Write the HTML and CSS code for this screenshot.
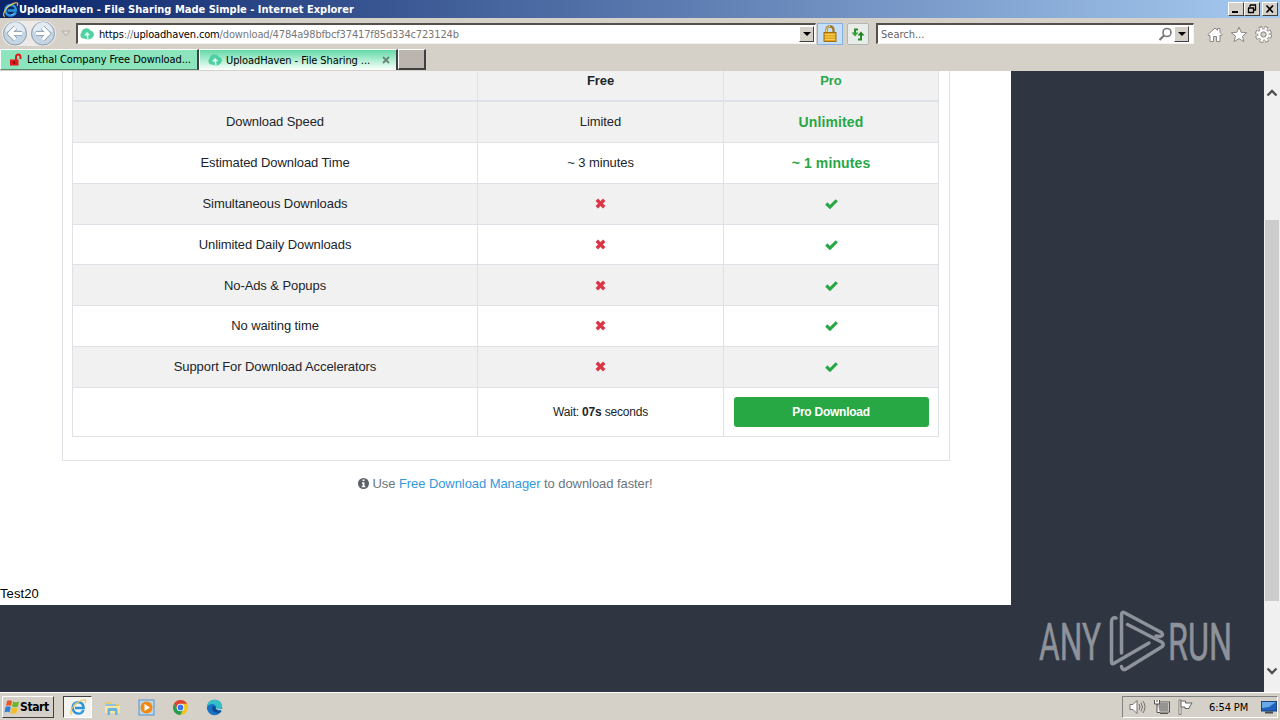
FILE: index.html
```html
<!DOCTYPE html>
<html lang="en">
<head>
    <meta charset="UTF-8">
    <meta name="viewport" content="width=device-width, initial-scale=1.0">
    <title>UploadHaven - File Sharing Made Simple</title>
    <link rel="stylesheet" href="styles.css">
</head>
<body>
<!-- shared icons -->
<svg class="defs" width="0" height="0">
    <symbol id="ie" viewBox="0 0 18 18">
        <path d="M14.500 12C13.500 14.300 11.600 15.500 9.300 15.500C6 15.500 3.700 13 3.700 9.800C3.700 6.500 6 4.200 9.300 4.200C12.700 4.200 14.700 6.500 14.600 10H6" fill="none" stroke="#2b93da" stroke-width="2.600"/>
        <path d="M13.200 12.500C12.300 14 11 14.700 9.300 14.700M4.200 8C5.200 5.500 7 4.400 9.500 4.400" fill="none" stroke="#8fd6f8" stroke-width="1"/>
        <path d="M3.200 16.300C.2 16 1.800 10.500 6.500 6.300C11 2.200 16 .8 16.600 2.600C16.800 3.300 16.500 4.200 15.900 5.200" fill="none" stroke="#ecc652" stroke-width="1.200"/>
    </symbol>
    <symbol id="haven" viewBox="0 0 14 14">
        <path d="M3.500 11.500A3.500 3.500 0 0 1 1.500 5.500A5 5 0 0 1 10.500 3.500A4 4 0 0 1 12.500 10.500Q11 12.500 8 12.500Z" fill="#4fd0a2"/>
        <path d="M8 12L7 7M4.800 8.500L7 6L9.500 8.300" fill="none" stroke="#d9fff0" stroke-width="1.400"/>
    </symbol>
    <symbol id="cross" viewBox="0 0 10 10">
        <path d="M1.600 1.600L8.400 8.400M8.400 1.600L1.600 8.400" stroke="#dc3545" stroke-width="3"/>
    </symbol>
    <symbol id="check" viewBox="0 0 12 10">
        <path d="M1.200 5L4.600 8.300L10.900 2" fill="none" stroke="#28a745" stroke-width="2.900"/>
    </symbol>
</svg>

<div class="titlebar">
    <svg class="title-icon" width="17" height="17"><use href="#ie"/></svg>
    <span class="title-text">UploadHaven - File Sharing Made Simple - Internet Explorer</span>
    <div class="window-buttons">
        <span class="win-btn"><svg width="12" height="10"><path d="M2 8H8" stroke="#000" stroke-width="2"/></svg></span>
        <span class="win-btn"><svg width="12" height="10"><path d="M4 1H10M4 1V3M9.500 1V6H8M2 4H8M2.500 4V8.500H7.500V4" fill="none" stroke="#000" stroke-width="1.300"/></svg></span>
        <span class="win-btn close"><svg width="12" height="10"><path d="M2.500 1.500L9 8.500M9 1.500L2.500 8.500" stroke="#000" stroke-width="1.700"/></svg></span>
    </div>
</div>

<div class="toolbar">
    <div class="nav">
        <svg width="56" height="27" viewBox="0 0 56 27">
            <rect x="1" y="1" width="54" height="25" rx="12" fill="#ece9e8"/>
            <g stroke="#8b9ba9" fill="#c4d5e4">
                <circle cx="14" cy="13.500" r="11.500"/>
                <circle cx="42" cy="13.500" r="11.500"/>
            </g>
            <g fill="#e3ebf2">
                <path d="M4 12A10 10 0 0 1 24 12Q14 8 4 12Z"/>
                <path d="M32 12A10 10 0 0 1 52 12Q42 8 32 12Z"/>
            </g>
            <g fill="none" stroke="#8799ab" stroke-width="4.600">
                <path d="M21 13.500H9M14.500 7.500L8.500 13.500L14.500 19.500"/>
                <path d="M35 13.500H47M41.500 7.500L47.500 13.500L41.500 19.500"/>
            </g>
            <g fill="none" stroke="#fff" stroke-width="3.200">
                <path d="M21 13.500H9M14.500 7.500L8.500 13.500L14.500 19.500"/>
                <path d="M35 13.500H47M41.500 7.500L47.500 13.500L41.500 19.500"/>
            </g>
        </svg>
        <svg width="10" height="7"><path d="M1 1H9L5 5.500Z" fill="#e0dcd7" stroke="#b2aca6"/></svg>
    </div>
    <div class="address">
        <svg width="14" height="14"><use href="#haven"/></svg>
        <span class="url"><b>https</b>://<b>uploadhaven.com</b>/download/4784a98bfbcf37417f85d334c723124b</span>
        <span class="dropdown"></span>
    </div>
    <div class="tool-btn lock">
        <svg width="16" height="18" viewBox="0 0 16 18">
            <path d="M4.500 9V5Q4.500 1.500 8 1.500T11.500 5V9" fill="none" stroke="#a17b2d" stroke-width="2.300"/>
            <path d="M4.500 8V5Q4.500 1.500 8 1.500" fill="none" stroke="#f5d67a"/>
            <rect x="2" y="7.500" width="12" height="9" fill="#e5a51b" stroke="#a36e11"/>
            <path d="M3 9.500H13M3 12H13M3 14.500H13" stroke="#f8cf58"/>
        </svg>
    </div>
    <div class="tool-btn">
        <svg width="16" height="16" viewBox="0 0 16 16">
            <path d="M8 3.500H5V8" fill="none" stroke="#278c27" stroke-width="2"/>
            <path d="M1.500 6.500H8.500L5 10.500Z" fill="#35a035"/>
            <path d="M8 13.500H11V8" fill="none" stroke="#278c27" stroke-width="2"/>
            <path d="M7.500 9.500H14.500L11 5.500Z" fill="#218021"/>
        </svg>
    </div>
    <div class="search">
        <span>Search...</span>
        <svg width="15" height="15" viewBox="0 0 15 15"><circle cx="9" cy="5.500" r="4" fill="none" stroke="#777" stroke-width="1.600"/><path d="M6 8.500L1.500 13" stroke="#777" stroke-width="2.200"/></svg>
        <span class="dropdown"></span>
    </div>
    <div class="ie-tools">
        <svg width="16" height="17" viewBox="0 0 16 17"><path d="M1 8.500L8 2L10.500 4.300V2.500H13V6.500L15.200 8.700L14 10L13 9V15.500H9.500V10.500H6.500V15.500H3V9.500L2 10Z" fill="#fff" stroke="#8c8884"/></svg>
        <svg width="18" height="17" viewBox="0 0 18 17"><path d="M9 1.200L11.200 6.300L16.700 6.700L12.500 10.200L13.900 15.700L9 12.600L4.100 15.700L5.500 10.200L1.300 6.700L6.800 6.300Z" fill="#fff" stroke="#8c8884"/></svg>
        <svg width="17" height="17" viewBox="0 0 17 17">
            <circle cx="8.500" cy="8.500" r="6.500" fill="none" stroke="#8c8884" stroke-width="4" stroke-dasharray="3.300 1.805"/>
            <circle cx="8.500" cy="8.500" r="6" fill="#8c8884"/>
            <circle cx="8.500" cy="8.500" r="6.200" fill="none" stroke="#fff" stroke-width="2.600" stroke-dasharray="2.300 2.570" stroke-dashoffset="-.4"/>
            <circle cx="8.500" cy="8.500" r="4.200" fill="#d5d0c8" stroke="#fff" stroke-width="2.300"/>
            <circle cx="8.500" cy="8.500" r="2.600" fill="#d5d0c8" stroke="#8c8884"/>
        </svg>
    </div>
</div>

<div class="tabs">
    <div class="tab">
        <svg width="14" height="14" viewBox="0 0 14 14"><path d="M1 6.500H9.500V12.500H1Z" fill="#e21b1b"/><path d="M7 7V4Q7 1.500 9.200 1.500T11.500 4V6" fill="none" stroke="#e21b1b" stroke-width="2"/><path d="M5.200 8V11" stroke="#7d1010" stroke-width="1.500"/></svg>
        <span>Lethal Company Free Download...</span>
    </div>
    <div class="tab active">
        <svg width="14" height="14"><use href="#haven"/></svg>
        <span>UploadHaven - File Sharing ...</span>
        <svg class="tab-close" width="8" height="8"><path d="M1 1L7 7M7 1L1 7" stroke="#668778" stroke-width="1.800"/></svg>
    </div>
    <div class="new-tab"></div>
</div>

<div class="viewport">
    <div class="page">
        <div class="card">
            <table>
                <thead>
                <tr>
                    <th class="feature"></th>
                    <th class="free">Free</th>
                    <th class="pro">Pro</th>
                </tr>
                </thead>
                <tbody>
                <tr>
                    <td>Download Speed</td>
                    <td>Limited</td>
                    <td class="pro-value">Unlimited</td>
                </tr>
                <tr>
                    <td>Estimated Download Time</td>
                    <td>~ 3 minutes</td>
                    <td class="pro-value">~ 1 minutes</td>
                </tr>
                <tr>
                    <td>Simultaneous Downloads</td>
                    <td><svg width="11" height="11"><use href="#cross"/></svg></td>
                    <td><svg width="13" height="11"><use href="#check"/></svg></td>
                </tr>
                <tr class="short">
                    <td>Unlimited Daily Downloads</td>
                    <td><svg width="11" height="11"><use href="#cross"/></svg></td>
                    <td><svg width="13" height="11"><use href="#check"/></svg></td>
                </tr>
                <tr class="low">
                    <td>No-Ads &amp; Popups</td>
                    <td><svg width="11" height="11"><use href="#cross"/></svg></td>
                    <td><svg width="13" height="11"><use href="#check"/></svg></td>
                </tr>
                <tr>
                    <td>No waiting time</td>
                    <td><svg width="11" height="11"><use href="#cross"/></svg></td>
                    <td><svg width="13" height="11"><use href="#check"/></svg></td>
                </tr>
                <tr>
                    <td>Support For Download Accelerators</td>
                    <td><svg width="11" height="11"><use href="#cross"/></svg></td>
                    <td><svg width="13" height="11"><use href="#check"/></svg></td>
                </tr>
                <tr class="actions">
                    <td></td>
                    <td class="wait">Wait: <b>07s</b> seconds</td>
                    <td><button class="pro-download">Pro Download</button></td>
                </tr>
                </tbody>
            </table>
        </div>
        <p class="hint">
            <svg width="11" height="11" viewBox="0 0 11 11"><circle cx="5.500" cy="5.500" r="5.500" fill="#5a6268"/><path d="M4.500 1.500H6.500V3H4.500ZM4 4.200H6.500V8H7.300V9.200H3.800V8H4.600V5.400H4Z" fill="#fff"/></svg>
            <span>Use <a>Free Download Manager</a> to download faster!</span>
        </p>
        <div class="test">Test20</div>
    </div>
    <div class="scrollbar">
        <svg class="arrow-up" width="12" height="8"><path d="M1.500 6.500L6 2L10.500 6.500" fill="none" stroke="#505050" stroke-width="2.300"/></svg>
        <div class="thumb"></div>
        <svg class="arrow-down" width="12" height="8"><path d="M1.500 1.500L6 6L10.500 1.500" fill="none" stroke="#505050" stroke-width="2.300"/></svg>
    </div>
    <svg class="watermark" width="215" height="74" viewBox="0 0 215 74">
        <g fill="#8e929a" stroke="#8e929a" stroke-width=".6" font-family="Roboto, sans-serif" font-size="52">
            <text x="6" y="54.500" textLength="62" lengthAdjust="spacingAndGlyphs">ANY</text>
            <text x="135" y="54.500" textLength="64" lengthAdjust="spacingAndGlyphs">RUN</text>
        </g>
        <g fill="none" stroke="#8e929a" stroke-width="3.500" stroke-linejoin="round" stroke-linecap="round">
            <path d="M83 13Q78.500 12 78.500 17V57Q78.500 60 81.500 58L116 38"/>
            <path d="M88.500 48V10Q88.500 6 92 8L128.500 27.500Q131 31 127 31.500L123 31"/>
            <path d="M94.500 19.500L128.500 37Q132 39.500 128.500 42L93 64Q89 65.500 88.500 61.500"/>
        </g>
    </svg>
</div>

<div class="taskbar">
    <div class="start">
        <svg width="16" height="16" viewBox="0 0 16 16"><path d="M3 2Q5 .5 8 2L7 7Q4.500 5.500 2 7Z" fill="#e8582b"/><path d="M9 2.500Q12 4 15 2.500L14 7.500Q11 9 8 7.500Z" fill="#6cb52e"/><path d="M1.500 8Q4 6.500 6.800 8L5.500 13.500Q3 12 .5 13.500Z" fill="#2f80d8"/><path d="M7.800 8.500Q10.500 10 13.500 8.500L12.500 14Q9.500 15.500 6.500 14Z" fill="#f5bf24"/></svg>
        <span>Start</span>
    </div>
    <div class="task-ie"><svg width="18" height="18"><use href="#ie"/></svg></div>
    <div class="launch">
        <svg width="17" height="17" viewBox="0 0 17 17"><path d="M1 3H6L8 5H15V14H1Z" fill="#e9c966"/><path d="M2 5H12V8H2Z" fill="#8bc2e3"/><path d="M1 7H16V14H1Z" fill="#f6e6a0"/><path d="M3.500 16V10.500Q3.500 9 5 9H12Q13.500 9 13.500 10.500V16H11V12H6V16Z" fill="#68b3df"/></svg>
        <svg width="17" height="17" viewBox="0 0 17 17"><rect x="1" y="1" width="15" height="15" fill="#b9d7ee" stroke="#5a92c3"/><circle cx="8.500" cy="8.500" r="6" fill="#f28a12"/><path d="M6.500 5L12 8.500L6.500 12Z" fill="#fff"/></svg>
        <svg width="17" height="17" viewBox="0 0 17 17"><circle cx="8.500" cy="8.500" r="7.500" fill="#f3c51d"/><path d="M2 4.800A7.500 7.500 0 0 1 15 4.800H8.500L5.500 10.500Z" fill="#dc4437"/><path d="M2 4.800A7.500 7.500 0 0 0 8.200 16L11.500 10.500L5.500 10.500Z" fill="#269b52"/><circle cx="8.500" cy="8.500" r="3.800" fill="#fff"/><circle cx="8.500" cy="8.500" r="2.900" fill="#3b78e7"/></svg>
        <svg width="17" height="17" viewBox="0 0 17 17"><circle cx="8.500" cy="8.500" r="7.700" fill="#1673c5"/><path d="M1 8Q1.500.8 9 .8Q16.200 1.500 16.200 7.500Q16 10.500 12 10.500Q9.500 10.300 10.200 8.500Q9.500 4.500 5.500 5Q2 5.500 1 8Z" fill="#35c0c8"/><path d="M6 9Q6 14 13.500 14L16 12Q11 13 9.800 9.500Q10 7 8 7Q6 7.500 6 9Z" fill="#0d4a93"/><path d="M9.800 9Q10.500 11 15 11L17 12.500V10H12Z" fill="#d5d0c8"/></svg>
    </div>
    <div class="tray">
        <svg width="17" height="16" viewBox="0 0 17 16"><path d="M1 5.500H4L8 1.500V14.500L4 10.500H1Z" fill="#fff" stroke="#77736f"/><path d="M10 5Q12 8 10 11M12 3.500Q15 8 12 12.500M14 2Q18 8 14 14" fill="none" stroke="#77736f"/></svg>
        <svg width="17" height="16" viewBox="0 0 17 16"><rect x="5" y="3.500" width="11" height="9" fill="#96948f" stroke="#fff"/><rect x="4.500" y="3" width="12" height="10" fill="none" stroke="#55524f"/><path d="M7 14.500H15" stroke="#55524f"/><path d="M1.500 1V5H6.500V1M4 1V3M4 5V13.500H7" fill="#fff" stroke="#55524f"/></svg>
        <svg width="17" height="16" viewBox="0 0 17 16"><path d="M2 1H4V15.500H2Z" fill="#fff" stroke="#66625f" stroke-width=".8"/><path d="M4 2H8.500V4H15L13 7L12 9.500H8V8H4Z" fill="#fff" stroke="#66625f"/></svg>
        <span class="clock">6:54 PM</span>
        <svg width="16" height="15" viewBox="0 0 16 15"><rect x=".5" y="1.500" width="15" height="9.500" fill="#1f62bd" stroke="#17437f"/><path d="M1 2H15L8 7L1 8Z" fill="#69a9ea"/><path d="M4 12.500H12" stroke="#454c54" stroke-width="2"/></svg>
    </div>
</div>
</body>
</html>
```

FILE: styles.css
```css
* {
    box-sizing: border-box;
}
body {
    margin: 0;
    width: 1280px;
    height: 720px;
    overflow: hidden;
    display: flex;
    flex-direction: column;
    background-color: #d5d0c8;
    font-family: "DejaVu Sans Condensed", "DejaVu Sans", sans-serif;
    font-size: 11px;
    color: #000;
}
svg {
    display: block;
    flex: none;
}
.defs {
    position: absolute;
}

/* title bar */
.titlebar {
    height: 18px;
    flex: none;
    display: flex;
    align-items: center;
    padding: 0 2px;
    background: linear-gradient(to right, #0a246a, #a6caf0);
}
.title-text {
    color: #fff;
    font-weight: bold;
    white-space: nowrap;
    letter-spacing: 0.01px;
}
.window-buttons {
    display: flex;
    margin-left: auto;
}
.win-btn {
    width: 16px;
    height: 14px;
    padding: 1px;
    background-color: #d5d0c8;
    border: 1px solid;
    border-color: #fff #404040 #404040 #fff;
}
.win-btn.close {
    margin-left: 2px;
}

/* toolbar */
.toolbar {
    height: 31px;
    flex: none;
    display: flex;
    align-items: center;
}
.nav {
    width: 76px;
    flex: none;
    display: flex;
    align-items: center;
    gap: 4px;
    padding-left: 1px;
}
.address, .search {
    height: 21px;
    display: flex;
    align-items: center;
    background-color: #fff;
    border: 1px solid #f4f2ee;
    border-top: 2px solid #55504b;
    border-left: 2px solid #55504b;
}
.address {
    width: 740px;
    padding: 0 1px 0 2px;
}
.url {
    margin-left: 5px;
    color: #777;
    white-space: nowrap;
    letter-spacing: -0.15px;
}
.url b {
    font-weight: normal;
    color: #000;
}
.dropdown {
    width: 15px;
    height: 16px;
    margin-left: auto;
    display: flex;
    align-items: center;
    justify-content: center;
    background-color: #d5d0c8;
    border: 1px solid;
    border-color: #fff #404040 #404040 #fff;
}
.dropdown::before {
    content: "";
    border: 4px solid transparent;
    border-top-color: #000;
    border-bottom: 0;
}
.tool-btn {
    width: 22px;
    height: 22px;
    margin-left: 8px;
    display: flex;
    align-items: center;
    justify-content: center;
    background-color: #e9edea;
    border: 1px solid #b4b6b5;
    border-radius: 2px;
}
.tool-btn.lock {
    width: 26px;
    margin-left: 1px;
    margin-right: -4px;
    background-color: #c5defa;
    border-color: #85b2e2;
    border-radius: 0;
}
.search {
    width: 318px;
    margin-left: 7px;
    padding: 0 4px 0 3px;
    color: #666;
}
.search svg {
    margin-left: auto;
}
.search .dropdown {
    margin-left: 1px;
}
.ie-tools {
    display: flex;
    align-items: center;
    gap: 7px;
    margin-left: 13px;
    padding-top: 2px;
}

/* tabs */
.tabs {
    height: 22px;
    flex: none;
    display: flex;
    padding-bottom: 1px;
}
.tab {
    width: 199px;
    height: 21px;
    display: flex;
    align-items: center;
    padding-left: 8px;
    background-color: #8ce5bd;
    border: 1px solid #fff;
    border-right: 2px solid #404040;
    border-bottom-color: #548b72;
    white-space: nowrap;
    letter-spacing: -0.08px;
}
.tab span {
    margin-left: 4px;
}
.tab.active {
    background: linear-gradient(to bottom, #65d9a8, #d5f7e7 75%, #fff);
    border-bottom: 0;
}
.tab-close {
    margin-left: auto;
    margin-right: 6px;
}
.new-tab {
    width: 28px;
    background-color: #bcb4ae;
    border: 1px solid #fff;
    border-right: 2px solid #404040;
    border-bottom: 2px solid #404040;
}

/* page */
.viewport {
    position: relative;
    height: 621px;
    flex: none;
    display: flex;
    justify-content: space-between;
    background-color: #2f3541;
}
.page {
    width: 1011px;
    height: 534px;
    background-color: #fff;
    font-family: "Liberation Sans", Arial, sans-serif;
    font-size: 13px;
    color: #212529;
}
.card {
    width: 888px;
    height: 390px;
    margin-left: 62px;
    padding: 0 9px;
    border: 1px solid #dee2e6;
    border-top: 0;
}
table {
    width: 867px;
    table-layout: fixed;
    border-collapse: separate;
    border-spacing: 0;
    border-left: 1px solid #dee2e6;
    letter-spacing: -0.08px;
}
th, td {
    height: 41px;
    padding: 0 0 2px;
    text-align: center;
    vertical-align: middle;
    border-right: 1px solid #dee2e6;
    border-bottom: 1px solid #dee2e6;
}
th {
    height: 31px;
    padding-bottom: 10px;
    border-bottom-width: 2px;
    background-color: #f1f1f1;
}
td svg {
    margin: 0 auto;
}
.feature {
    width: 405px;
}
.free {
    width: 246px;
}
.pro, .pro-value {
    color: #28a745;
}
.pro-value {
    padding-bottom: 1px;
    font-size: 14px;
    font-weight: bold;
    letter-spacing: 0.12px;
}
tbody tr:nth-child(odd) td {
    background-color: #f1f1f1;
}
.short td {
    height: 40px;
    padding-bottom: 0;
}
.low td {
    padding-bottom: 0;
}
.actions td {
    height: 49px;
    padding-bottom: 0;
}
.wait {
    font-size: 12px;
    letter-spacing: -0.2px;
}
.pro-download {
    display: block;
    width: 195px;
    height: 30px;
    margin: 0 auto;
    padding: 0;
    border: 0;
    border-radius: 3px;
    background-color: #28a745;
    color: #fff;
    font-family: inherit;
    font-size: 12px;
    font-weight: bold;
    letter-spacing: -0.25px;
}
.hint {
    display: flex;
    justify-content: center;
    align-items: center;
    gap: 3px;
    height: 16px;
    margin: 14px 0 0;
    color: #6c757d;
    letter-spacing: -0.07px;
}
.hint a {
    color: #3498db;
}
.test {
    margin-top: 95px;
    line-height: 15px;
    color: #000;
    letter-spacing: 0.1px;
}
.scrollbar {
    width: 16px;
    height: 621px;
    display: flex;
    flex-direction: column;
    align-items: center;
    background-color: #f0f0f0;
}
.arrow-up {
    margin-top: 18px;
}
.thumb {
    width: 14px;
    height: 381px;
    margin-top: 123px;
    background-color: #cdcdcd;
}
.arrow-down {
    margin-top: auto;
    margin-bottom: 17px;
}
.watermark {
    position: absolute;
    left: 1033px;
    top: 534px;
}

/* taskbar */
.taskbar {
    height: 28px;
    flex: none;
    display: flex;
    align-items: center;
    padding: 1px 2px 0;
    border-top: 1px solid #fff;
}
.start {
    width: 52px;
    height: 22px;
    display: flex;
    align-items: center;
    padding-left: 1px;
    border: 1px solid;
    border-color: #fff #404040 #404040 #fff;
    font-size: 12px;
    font-weight: bold;
    letter-spacing: -0.4px;
}
.task-ie {
    width: 29px;
    height: 22px;
    margin-left: 9px;
    display: flex;
    align-items: center;
    justify-content: center;
    background-color: #f5f3f0;
    border: 1px solid;
    border-color: #404040 #fff #fff #404040;
}
.launch {
    display: flex;
    gap: 17px;
    margin-left: 12px;
}
.tray {
    width: 156px;
    height: 22px;
    display: flex;
    align-items: center;
    gap: 7px;
    margin-left: auto;
    padding-left: 6px;
    border: 1px solid;
    border-color: #808080 #fff #fff #808080;
}
.clock {
    width: 44px;
    margin-left: 8px;
    margin-right: 4px;
    white-space: nowrap;
    letter-spacing: -0.1px;
}
```
